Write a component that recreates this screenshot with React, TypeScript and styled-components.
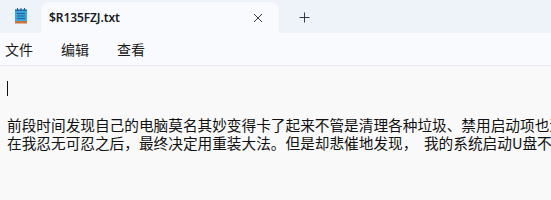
import React from 'react'
import { styled, createGlobalStyle } from 'styled-components'

const GlobalStyle = createGlobalStyle`
  html, body {
    margin: 0;
    padding: 0;
    background: #f9f9f9;
  }
  body {
    font-family: "Noto Sans", "Noto Sans CJK SC", sans-serif;
  }
`;

const Window = styled.div`
  width: 551px;
  height: 200px;
  display: flex;
  flex-direction: column;
  overflow: hidden;
  background: #f9f9f9;
`;

const TabBar = styled.div`
  height: 33px;
  background: #eef2f9;
  display: flex;
  align-items: flex-end;
  flex-shrink: 0;
`;

const AppIcon = styled.div`
  width: 40px;
  height: 33px;
  display: flex;
  align-items: center;
  justify-content: center;
  padding-left: 2px;
  box-sizing: border-box;
`;

const Tab = styled.div`
  width: 238px;
  height: 31px;
  margin-left: 1px;
  background: #f9fafd;
  border-radius: 7px 7px 0 0;
  display: flex;
  align-items: center;
  padding: 0 13px 0 8px;
  box-sizing: border-box;
  box-shadow: 0 0 1px rgba(0, 0, 0, 0.08);
`;

const TabTitle = styled.span`
  flex: 1;
  font-family: "Noto Sans", "Noto Sans CJK SC", sans-serif;
  font-size: 12px;
  font-weight: 600;
  color: #1b1b1b;
  letter-spacing: -0.1px;
`;

const IconButton = styled.div`
  width: 16px;
  height: 31px;
  display: flex;
  align-items: center;
  justify-content: center;
  color: #3a3a3a;
`;

const NewTab = styled.div`
  width: 50px;
  height: 31px;
  display: flex;
  align-items: center;
  justify-content: center;
  color: #3a3a3a;
`;

const MenuBar = styled.div`
  height: 32px;
  background: #f9fafd;
  display: flex;
  align-items: center;
  padding-left: 5px;
  gap: 28px;
  border-bottom: 1px solid #e8eaed;
  flex-shrink: 0;
`;

const MenuItem = styled.span`
  font-family: "Noto Sans CJK SC", sans-serif;
  font-size: 14px;
  color: #1a1a1a;
  line-height: 20px;
`;

const Editor = styled.div`
  flex: 1;
  padding: 14px 0 0 7px;
  font-family: "Noto Sans CJK SC", sans-serif;
  font-size: 14.67px;
  line-height: 18px;
  color: #111;
  white-space: pre;
  overflow: hidden;
`;

const Line = styled.div`
  height: 18px;
  position: relative;
  overflow: hidden;
`;

const Caret = styled.span`
  position: absolute;
  left: 0;
  top: 1px;
  width: 1px;
  height: 15px;
  background: #111;
`;

function NotepadIcon() {
  return (
    <svg width="14" height="17" viewBox="0 0 14 17">
      <rect x="1" y="1.5" width="12" height="13" rx="1" fill="#3aa7dd" />
      <rect x="1" y="13" width="12" height="2.5" fill="#c8743a" />
      <rect x="1" y="1.5" width="12" height="1.5" fill="#2a6fa8" />
      <rect x="3" y="5" width="8" height="1" fill="#1f5f91" />
      <rect x="3" y="7.5" width="8" height="1" fill="#1f5f91" />
      <rect x="3" y="10" width="8" height="1" fill="#1f5f91" />
      <rect x="3" y="0" width="1" height="2.5" fill="#1f5f91" />
      <rect x="6.5" y="0" width="1" height="2.5" fill="#1f5f91" />
      <rect x="10" y="0" width="1" height="2.5" fill="#1f5f91" />
    </svg>
  )
}

export default function App() {
  return (
    <>
      <GlobalStyle />
      <Window>
        <TabBar>
          <AppIcon>
            <NotepadIcon />
          </AppIcon>
          <Tab>
            <TabTitle>$R135FZJ.txt</TabTitle>
            <IconButton>
              <svg width="10" height="10" viewBox="0 0 10 10">
                <path d="M1 1L9 9M9 1L1 9" stroke="currentColor" strokeWidth="1" />
              </svg>
            </IconButton>
          </Tab>
          <NewTab>
            <svg width="11" height="11" viewBox="0 0 11 11">
              <path d="M5.5 0.5V10.5M0.5 5.5H10.5" stroke="currentColor" strokeWidth="1" />
            </svg>
          </NewTab>
        </TabBar>
        <MenuBar>
          <MenuItem>文件</MenuItem>
          <MenuItem>编辑</MenuItem>
          <MenuItem>查看</MenuItem>
        </MenuBar>
        <Editor>
          <Line>
            <Caret />
          </Line>
          <Line />
          <Line>前段时间发现自己的电脑莫名其妙变得卡了起来不管是清理各种垃圾、禁用启动项也没有用</Line>
          <Line>在我忍无可忍之后，最终决定用重装大法。但是却悲催地发现，  我的系统启动U盘不见了</Line>
        </Editor>
      </Window>
    </>
  )
}
